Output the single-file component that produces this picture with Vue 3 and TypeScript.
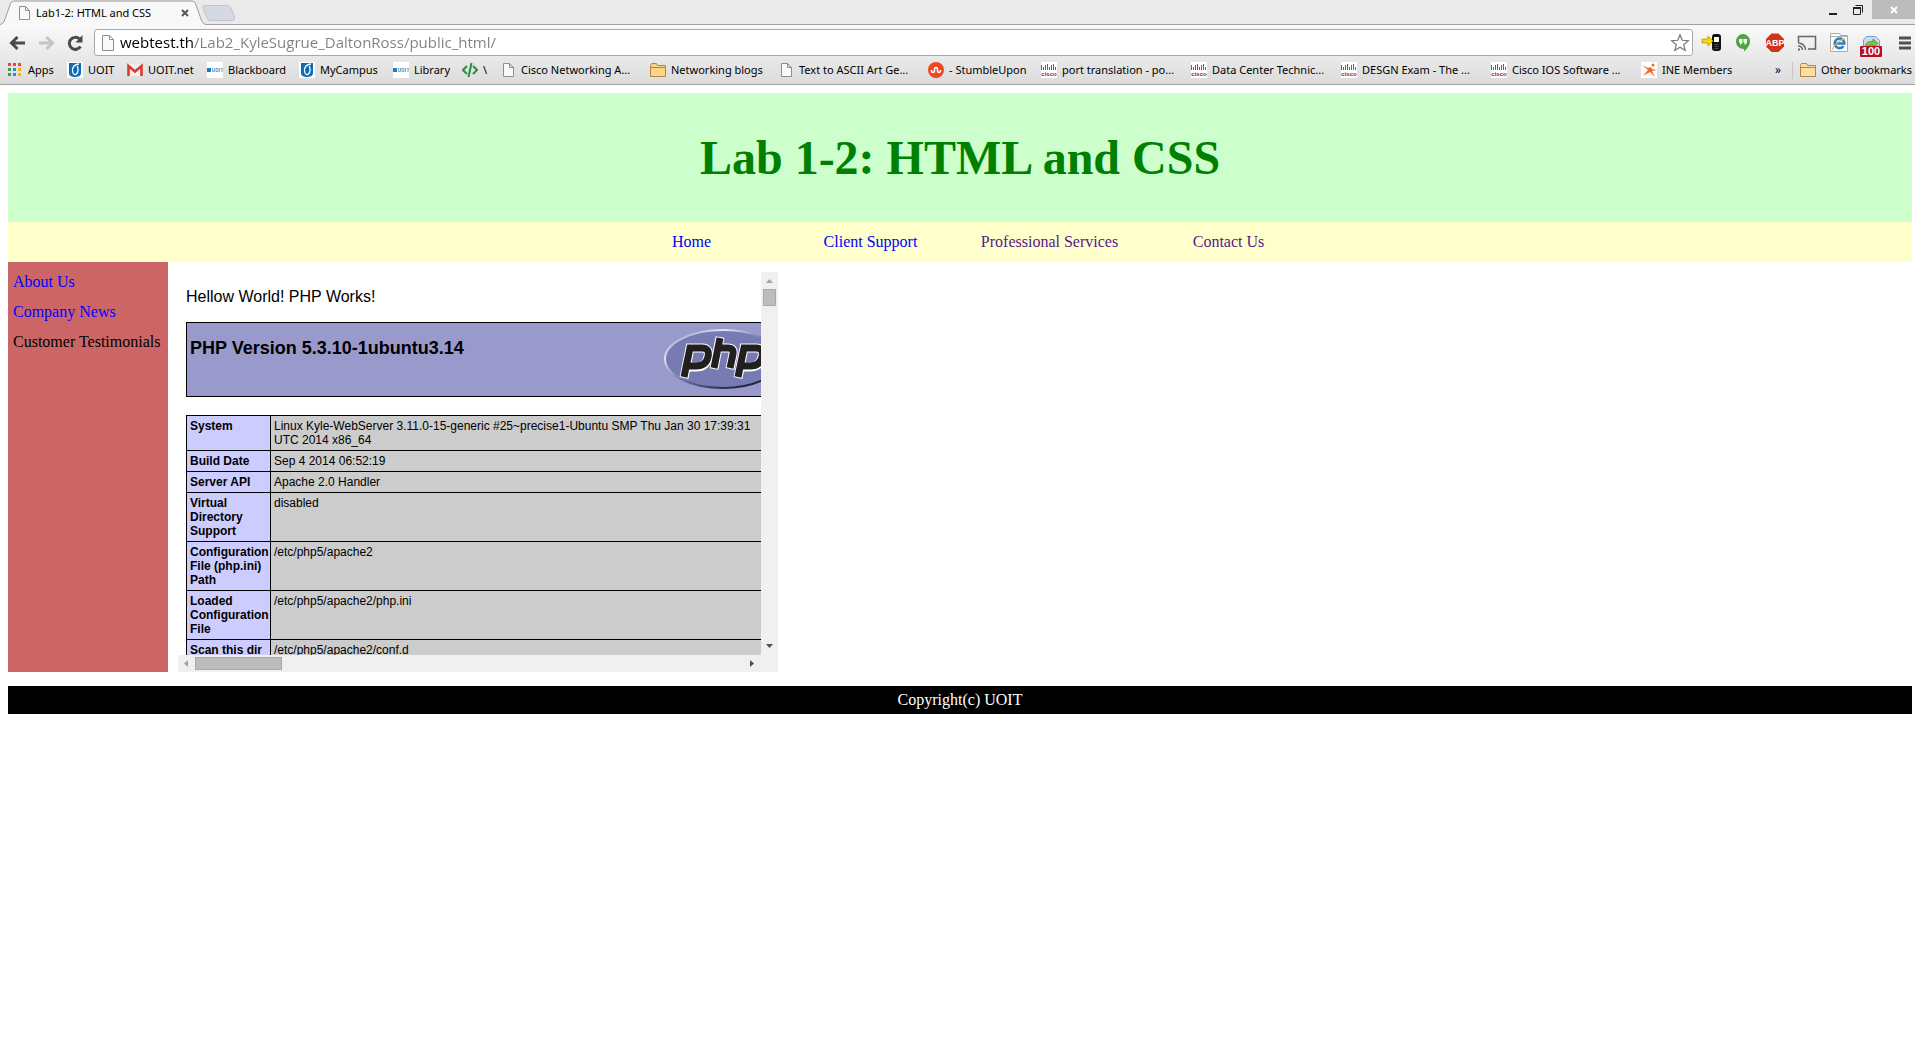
<script setup lang="ts">
interface Bookmark {
  label: string
  icon: string
  width: number
}

const address = 'webtest.th/Lab2_KyleSugrue_DaltonRoss/public_html/'

const bookmarks: Bookmark[] = [
  { label: 'Apps', icon: 'apps', width: 60 },
  { label: 'UOIT', icon: 'uoit', width: 60 },
  { label: 'UOIT.net', icon: 'gmail', width: 80 },
  { label: 'Blackboard', icon: 'library', width: 92 },
  { label: 'MyCampus', icon: 'uoit', width: 94 },
  { label: 'Library', icon: 'library', width: 69 },
  { label: '\\', icon: 'code', width: 38 },
  { label: 'Cisco Networking A...', icon: 'file', width: 150 },
  { label: 'Networking blogs', icon: 'folder', width: 128 },
  { label: 'Text to ASCII Art Ge...', icon: 'file', width: 150 },
  { label: '- StumbleUpon', icon: 'stumble', width: 113 },
  { label: 'port translation - po...', icon: 'cisco', width: 150 },
  { label: 'Data Center Technic...', icon: 'cisco', width: 150 },
  { label: 'DESGN Exam - The ...', icon: 'cisco', width: 150 },
  { label: 'Cisco IOS Software ...', icon: 'cisco', width: 150 },
  { label: 'INE Members', icon: 'ine', width: 110 },
]

const navLinks = [
  { label: 'Home', visited: false },
  { label: 'Client Support', visited: false },
  { label: 'Professional Services', visited: true },
  { label: 'Contact Us', visited: true },
]

const phpRows = [
  { name: 'System', value: 'Linux Kyle-WebServer 3.11.0-15-generic #25~precise1-Ubuntu SMP Thu Jan 30 17:39:31\nUTC 2014 x86_64' },
  { name: 'Build Date', value: 'Sep 4 2014 06:52:19' },
  { name: 'Server API', value: 'Apache 2.0 Handler' },
  { name: 'Virtual Directory Support', value: 'disabled' },
  { name: 'Configuration File (php.ini) Path', value: '/etc/php5/apache2' },
  { name: 'Loaded Configuration File', value: '/etc/php5/apache2/php.ini' },
  { name: 'Scan this dir', value: '/etc/php5/apache2/conf.d' },
]

const appColors = ['#e8453c', '#e8453c', '#e8453c', '#34a060', '#3b7de0', '#f5b400', '#34a060', '#3b7de0', '#f5b400']
const ciscoBars = [5, 3, 5, 6, 3, 5, 6, 3]
</script>

<template>
  <div class="browser">
    <header class="chrome">
      <div class="tabstrip">
        <div class="tab">
          <svg class="tab-shape" width="206" height="25" viewBox="0 0 206 25">
            <path d="M0 24.5 C3 24 4 22 5 19 L10 5 C11 2 12 1 15 1 H191 C194 1 195 2 196 5 L201 19 C202 22 203 24 206 24.5 V25 H0Z" fill="#f8f8f8" />
            <path d="M0 24.5 C3 24 4 22 5 19 L10 5 C11 2 12 1 15 1 H191 C194 1 195 2 196 5 L201 19 C202 22 203 24 206 24.5" fill="none" stroke="#9d9d9d" />
          </svg>
          <svg class="tab-icon" width="16" height="16" viewBox="0 0 16 16">
            <path d="M3.5 1.5h6l4 4v9h-10z M9.5 1.5v4h4" fill="#fafafa" stroke="#8e8e8e" />
          </svg>
          <span class="tab-title">Lab1-2: HTML and CSS</span>
          <button class="plain tab-close" aria-label="Close tab">
            <svg width="8" height="8" viewBox="0 0 8 8"><path d="M1 1l6 6M7 1L1 7" stroke="#555" stroke-width="2" /></svg>
          </button>
        </div>
        <button class="plain new-tab" aria-label="New tab">
          <svg width="34" height="18" viewBox="0 0 34 18">
            <path d="M3 1.500H25C27 1.500 28 2 29 4L32.500 13C33 15 32 16.500 30 16.500H9C7 16.500 6 16 5 14L1 4C0.500 2.500 1 1.500 3 1.500Z" fill="#d5dae2" stroke="#bfc3c9" />
          </svg>
        </button>
        <div class="window-buttons">
          <button class="plain" aria-label="Minimize">
            <svg width="10" height="12" viewBox="0 0 10 12"><path d="M0 9h8v2H0z" fill="#222" /></svg>
          </button>
          <button class="plain" aria-label="Restore">
            <svg width="12" height="12" viewBox="0 0 12 12"><path d="M1.500 3.500h7v7h-7z M3.500 1.500h7v7" fill="none" stroke="#222" /><path d="M1 3h8v2H1z" fill="#222" /></svg>
          </button>
          <button class="plain close" aria-label="Close">
            <svg width="8" height="8" viewBox="0 0 8 8"><path d="M1 1l6 6M7 1L1 7" stroke="#fff" stroke-width="2" /></svg>
          </button>
        </div>
      </div>

      <div class="toolbar">
        <button class="plain" aria-label="Back">
          <svg width="17" height="16" viewBox="0 0 17 16"><path d="M16 8H3M8.500 2L2.500 8l6 6" fill="none" stroke="#4a4a4a" stroke-width="3" /></svg>
        </button>
        <button class="plain" aria-label="Forward">
          <svg width="17" height="16" viewBox="0 0 17 16"><path d="M1 8h13M8.500 2l6 6-6 6" fill="none" stroke="#c4c4c4" stroke-width="3" /></svg>
        </button>
        <button class="plain" aria-label="Reload">
          <svg width="17" height="16" viewBox="0 0 17 16"><path d="M13.500 11.500A6 6 0 1 1 12.500 4" fill="none" stroke="#4a4a4a" stroke-width="3" /><path d="M15.500 0v7.500H8.500z" fill="#4a4a4a" /></svg>
        </button>
        <div class="omnibox">
          <svg width="16" height="18" viewBox="0 0 16 18"><path d="M2.500 1.500h7l4 4v11h-11z M9.500 1.500v4h4" fill="#fafafa" stroke="#8e8e8e" /></svg>
          <input class="address" type="text" aria-label="Address" :value="address" spellcheck="false" />
          <button class="plain" aria-label="Bookmark this page">
            <svg width="20" height="20" viewBox="0 0 20 20"><path d="M10 1.800l2.300 5.500 6 .4-4.600 3.900 1.500 5.900-5.200-3.200-5.200 3.200 1.500-5.900L1.700 7.700l6-.4z" fill="#fff" stroke="#777" stroke-width="1.200" /></svg>
          </button>
        </div>
        <div class="extensions">
          <button class="plain" aria-label="Send to phone">
            <svg width="20" height="20" viewBox="0 0 20 20">
              <rect x="11" y="1" width="9" height="17" rx="3" fill="#111" /><rect x="13" y="4" width="5" height="5" fill="#fff" /><path d="M13.500 11.500h4M13.500 13.500h4M13.500 15.500h4" stroke="#666" stroke-dasharray="1 .5" />
              <path d="M1 6h6V3l5 5-5 5v-3H1z" fill="#f7dc00" stroke="#b89a00" stroke-width=".8" />
            </svg>
          </button>
          <button class="plain" aria-label="Hangouts">
            <svg width="20" height="20" viewBox="0 0 20 20"><path d="M10 1a7 7.500 0 0 1 7 7.500c0 4-3 7.500-6 10V16C6 16 3 12.500 3 8.500A7 7.500 0 0 1 10 1z" fill="#4fa443" /><path d="M6 6h3.500v3.500L8 11.500H7V9.500H6z M10.500 6H14v3.500l-1.500 2h-1V9.500h-1z" fill="#fff" /></svg>
          </button>
          <button class="plain" aria-label="Adblock Plus">
            <svg width="20" height="20" viewBox="0 0 20 20"><path d="M6.500.5h7l5.500 5.500v7.500l-5.500 5.500h-7L1 13.500V6z" fill="#d0341a" /><text x="10" y="13" text-anchor="middle" font-family="Liberation Sans, sans-serif" font-weight="bold" font-size="9" fill="#fff">ABP</text></svg>
          </button>
          <button class="plain" aria-label="Cast">
            <svg width="20" height="20" viewBox="0 0 20 20" fill="none" stroke="#666"><path d="M1.500 9V3.500h17v12.500H11" stroke-width="1.500" /><path d="M1 10a7 7 0 0 1 7.500 7M1 13a4 4 0 0 1 4.500 4" stroke-width="1.400" /><path d="M1 15.500h2v2H1z" fill="#666" stroke="none" /></svg>
          </button>
          <button class="plain" aria-label="Internet Explorer tab">
            <svg width="20" height="20" viewBox="0 0 20 20"><path d="M1.500.5h9l1 2h7v16h-17z" fill="#fff" stroke="#aaa" /><path d="M2 3.500h16" stroke="#aaa" /><path d="M14.500 13a4.800 4.800 0 1 1 .8-2.500H7" fill="none" stroke="#2a7fc9" stroke-width="2.600" /><path d="M4 17c-1-3 7-11 12.500-11" fill="none" stroke="#f3b52b" stroke-width="1.300" /></svg>
          </button>
          <button class="plain badge-button" aria-label="Tasks">
            <svg width="22" height="22" viewBox="0 0 22 22"><path d="M3.500 11V5l3-3.500h9l4 4V11z" fill="#c6ddf0" stroke="#6ca4cf" /><path d="M6 9.500c0-2 2-3 7-3V4l5 4.500-5 3.500V10H9v2H6z" fill="#86c540" stroke="#4b8b1e" stroke-width=".8" /><rect x="0" y="11" width="22" height="11" rx="1" fill="#b90f23" /><text x="11" y="20" text-anchor="middle" font-family="Liberation Sans, sans-serif" font-weight="bold" font-size="11" fill="#fff">100</text></svg>
          </button>
        </div>
        <button class="plain menu" aria-label="Menu">
          <svg width="14" height="14" viewBox="0 0 14 14"><path d="M1 2h12M1 7h12M1 12h12" stroke="#505050" stroke-width="3" /></svg>
        </button>
      </div>

      <nav class="bookmarks" aria-label="Bookmarks">
        <a v-for="(b, i) in bookmarks" :key="i" href="#" class="bookmark" :style="{ width: b.width + 'px' }">
          <svg width="16" height="16" viewBox="0 0 16 16">
            <g v-if="b.icon === 'apps'"><rect v-for="(c, n) in appColors" :key="n" :x="1 + (n % 3) * 5" :y="1 + Math.floor(n / 3) * 5" width="3" height="3" :fill="c" /></g>
            <g v-else-if="b.icon === 'uoit'"><rect width="16" height="16" fill="#fff" /><path d="M2 1h12v10c0 3-3 4-6 4s-6-1-6-4z" fill="#0a6cb8" /><path d="M12 2C8 2 5 5 5.500 9c.3 3 2.500 4.500 4 3 2-2 2-6 .5-8" fill="none" stroke="#fff" stroke-width="1.300" /></g>
            <g v-else-if="b.icon === 'gmail'"><rect y="2" width="16" height="12" rx="1" fill="#f3f0f0" /><path d="M1.500 14V4L8 9.500 14.500 4v10" fill="none" stroke="#d93a35" stroke-width="2.600" /></g>
            <g v-else-if="b.icon === 'library'"><rect width="16" height="16" fill="#fff" /><rect y="6" width="4" height="4" fill="#1680c4" /><path d="M5.500 6v3.500h2V6 M9 6.500h2v3H9z M12.500 6v4 M14 6.500h2M15 6.500V10" fill="none" stroke="#79a6c9" /></g>
            <g v-else-if="b.icon === 'code'" fill="none" stroke="#2a8c46" stroke-width="2"><path d="M5 4L1 8l4 4M11 4l4 4-4 4M9.500 1l-3 14" /></g>
            <path v-else-if="b.icon === 'file'" d="M3.500 1.500h6l4 4v9h-10z M9.500 1.500v4h4" fill="#fafafa" stroke="#8e8e8e" />
            <path v-else-if="b.icon === 'folder'" d="M.5 3.500l1-2h5l1 2h8v11H.5z M.5 5.500h15" fill="#fbd488" stroke="#b28445" />
            <g v-else-if="b.icon === 'stumble'"><circle cx="8" cy="8" r="8" fill="#eb4823" /><path d="M3.500 8v1a1.500 1.500 0 0 0 3 0V7a1.500 1.500 0 0 1 3 0v2a1.500 1.500 0 0 0 3 0V8" fill="none" stroke="#fff" stroke-width="1.500" /></g>
            <g v-else-if="b.icon === 'cisco'"><rect width="16" height="16" fill="#fff" /><rect v-for="(h, n) in ciscoBars" :key="n" :x="n * 2" :y="8 - h" width="1" :height="h" fill="#456f85" /><text x="8" y="14" text-anchor="middle" font-family="Liberation Sans, sans-serif" font-weight="bold" font-size="6" fill="#a5121c">cisco</text></g>
            <g v-else><rect width="16" height="16" fill="#fff" /><circle cx="12" cy="3" r="1.500" fill="#ee6a2c" /><path d="M1 3l6 3 3-1 1 2 5 1-5 1 3 6-5-5-7 4 5-6z" fill="#ee6a2c" /></g>
          </svg>
          <span>{{ b.label }}</span>
        </a>
        <button class="plain overflow" aria-label="More bookmarks">»</button>
        <a href="#" class="bookmark other">
          <svg width="16" height="16" viewBox="0 0 16 16"><path d="M.5 3.500l1-2h5l1 2h8v11H.5z M.5 5.500h15" fill="#fbe0a5" stroke="#b28445" /></svg>
          <span>Other bookmarks</span>
        </a>
      </nav>
    </header>

    <main class="page">
      <div class="banner"><h1>Lab 1-2: HTML and CSS</h1></div>
      <nav class="site-nav" aria-label="Site">
        <a v-for="link in navLinks" :key="link.label" href="#" :class="{ visited: link.visited }">{{ link.label }}</a>
      </nav>
      <div class="columns">
        <aside class="sidebar">
          <a href="#">About Us</a>
          <a href="#">Company News</a>
          <span>Customer Testimonials</span>
        </aside>
        <section class="frame">
          <div class="viewport">
            <p class="hello">Hellow World! PHP Works!</p>
            <div class="php-head">
              <h2>PHP Version 5.3.10-1ubuntu3.14</h2>
              <svg width="120" height="67" viewBox="0 0 120 67">
                <defs>
                  <linearGradient id="rim" x1="0" y1="0" x2="1" y2="1">
                    <stop offset="0" stop-color="#7d80b5" /><stop offset=".25" stop-color="#e4e4f2" /><stop offset=".5" stop-color="#7072a8" /><stop offset=".8" stop-color="#26253a" />
                  </linearGradient>
                </defs>
                <ellipse cx="60" cy="33" rx="58" ry="29" fill="#777bb3" stroke="url(#rim)" stroke-width="2" />
                <g fill="none" stroke-linejoin="miter">
                  <g stroke="#fff" stroke-width="9">
                    <path d="M21 52L27 22H39Q47 22 45 31Q43 41 33 41H26" /><path d="M51 43L57 11M55 22H65Q71 22 70 28L67 43" /><path d="M75 52L81 22H93Q101 22 99 31Q97 41 87 41H80" />
                  </g>
                  <g stroke="#221f20" stroke-width="7">
                    <path d="M21 51L27 22H39Q47 22 45 31Q43 40 33 40H26" /><path d="M51 42L57 12M55 22H65Q71 22 70 28L67 42" /><path d="M75 51L81 22H93Q101 22 99 31Q97 40 87 40H80" />
                  </g>
                </g>
              </svg>
            </div>
            <table class="php-info">
              <tbody>
                <tr v-for="row in phpRows" :key="row.name"><th scope="row">{{ row.name }}</th><td>{{ row.value }}</td></tr>
              </tbody>
            </table>
          </div>
          <div class="bar vertical">
            <svg width="17" height="17" viewBox="0 0 17 17"><path d="M5 11L8.500 7 12 11z" fill="#a3a3a3" /></svg>
            <div class="thumb"></div>
            <svg class="end" width="17" height="17" viewBox="0 0 17 17"><path d="M5 6L8.500 10 12 6z" fill="#505050" /></svg>
          </div>
          <div class="bar horizontal">
            <svg width="17" height="17" viewBox="0 0 17 17"><path d="M10 5L6 8.500 10 12z" fill="#a3a3a3" /></svg>
            <div class="thumb"></div>
            <svg class="end" width="17" height="17" viewBox="0 0 17 17"><path d="M6 5L10 8.500 6 12z" fill="#505050" /></svg>
          </div>
          <div class="corner"></div>
        </section>
      </div>
      <footer class="footer">Copyright(c) UOIT</footer>
    </main>
  </div>
</template>

<style>
body {
  background: #fff;
  overflow-x: hidden;
}
</style>

<style scoped>
.browser {
  font-family: "Liberation Serif", serif;
  font-size: 16px;
}
svg {
  display: block;
  flex: none;
}
.plain {
  padding: 0;
  border: 0;
  background: none;
  display: flex;
  align-items: center;
  justify-content: center;
}
.chrome {
  height: 84px;
  border-bottom: 1px solid #a2a2a2;
  background: linear-gradient(#eaeaea 24px, #f9f9f9 25px, #dcdcdc 84px);
  font-family: "Noto Sans", "Open Sans", sans-serif;
  font-size: 11px;
  color: #000;
}
.tabstrip {
  height: 25px;
  display: flex;
  box-shadow: inset 0 -1px #a0a0a0;
}
.tab {
  position: relative;
  width: 202px;
  padding-left: 16px;
  box-sizing: border-box;
  display: flex;
  align-items: center;
}
.tab-shape {
  position: absolute;
  left: 0;
  top: 0;
}
.tab-icon,
.tab-title,
.tab-close {
  position: relative;
}
.tab-title {
  flex: 1;
  margin-left: 4px;
  white-space: nowrap;
}
.tab-close {
  margin-right: 13px;
}
.new-tab {
  height: 26px;
}
.window-buttons {
  margin-left: auto;
  display: flex;
  align-items: flex-start;
}
.window-buttons .plain {
  height: 19px;
  width: 24px;
}
.window-buttons .close {
  width: 43px;
  margin-left: 2px;
  background: #bcbcbc;
}
.toolbar {
  height: 35px;
  padding: 0 3px 0 9px;
  display: flex;
  align-items: center;
}
.toolbar > .plain {
  width: 17px;
  margin-right: 12px;
}
.omnibox {
  flex: 1;
  height: 27px;
  margin: 0 8px 0 -2px;
  padding: 0 2px 0 5px;
  box-sizing: border-box;
  border: 1px solid #a9a9a9;
  border-radius: 3px;
  background: #fff;
  display: flex;
  align-items: center;
}
.address {
  flex: 1;
  min-width: 0;
  height: 24px;
  margin-left: 4px;
  padding: 0 0 2px;
  box-sizing: border-box;
  border: 0;
  outline: 0;
  font: 15px/22px "Open Sans", "Noto Sans", sans-serif;
  color: transparent;
  background: linear-gradient(to right, #000 74px, #808080 74px);
  background-clip: text;
  -webkit-background-clip: text;
}
.extensions {
  display: flex;
  gap: 12px;
}
.extensions .plain {
  width: 20px;
  height: 20px;
}
.extensions .badge-button {
  height: 27px;
  margin-bottom: -7px;
}
.toolbar > .menu {
  width: 14px;
  margin: 0 0 0 17px;
}
.bookmarks {
  height: 20px;
  padding: 0 3px 0 7px;
  display: flex;
  align-items: center;
}
.bookmark {
  display: flex;
  align-items: center;
  gap: 5px;
  flex: none;
  color: #000;
  text-decoration: none;
  white-space: nowrap;
}
.bookmark span {
  padding-bottom: 2px;
}
.overflow {
  margin-left: auto;
  padding: 0 11px 2px 0;
  font: 12px "Open Sans", sans-serif;
}
.other {
  padding-left: 7px;
  border-left: 1px solid #c8c8c8;
}
.page {
  padding: 8px 3px 8px 8px;
}
.banner {
  height: 129px;
  background: #cfc;
  display: flex;
  align-items: center;
  justify-content: center;
}
.banner h1 {
  margin: 0;
  font-size: 48px;
  color: #008000;
}
.site-nav {
  height: 40px;
  background: #ffc;
  display: grid;
  grid-template-columns: repeat(4, 179px);
  justify-content: center;
  align-items: center;
  text-align: center;
}
a {
  color: #00f;
  text-decoration: none;
}
.site-nav .visited {
  color: #551a8b;
}
.columns {
  display: flex;
  gap: 10px;
}
.sidebar {
  width: 160px;
  padding: 5px;
  box-sizing: border-box;
  background: #c66;
  display: flex;
  flex-direction: column;
  line-height: 30px;
}
.frame {
  margin-top: 10px;
  display: grid;
  grid-template: 383px 17px / 583px 17px;
  font-family: "Liberation Sans", sans-serif;
}
.viewport {
  padding: 0 8px;
  overflow: hidden;
}
.hello {
  margin: 16px 0;
  line-height: 18px;
}
.php-head {
  width: 601px;
  height: 75px;
  padding: 3px;
  box-sizing: border-box;
  border: 1px solid #000;
  background: #99c;
  display: flex;
  justify-content: space-between;
}
.php-head h2 {
  margin: 12px 0 0;
  padding: 0;
  font-size: 18px;
  line-height: 20px;
}
.php-info {
  width: 601px;
  margin-top: 18px;
  table-layout: fixed;
  border-collapse: collapse;
  font-size: 12px;
  line-height: 14px;
}
.php-info th,
.php-info td {
  padding: 3px;
  border: 1px solid #000;
  text-align: left;
  vertical-align: top;
  white-space: pre-line;
  background: #ccc;
}
.php-info th {
  width: 77px;
  background: #ccf;
}
.bar {
  background: #f0f0f0;
  display: flex;
  align-items: center;
}
.vertical {
  flex-direction: column;
}
.thumb {
  box-sizing: border-box;
  border: 1px solid #a8a8a8;
  background: #bcbcbc;
}
.vertical .thumb {
  width: 13px;
  height: 17px;
}
.horizontal .thumb {
  width: 87px;
  height: 13px;
}
.vertical .end {
  margin-top: auto;
}
.horizontal .end {
  margin-left: auto;
}
.corner {
  background: #f0f0f0;
}
.footer {
  margin-top: 14px;
  background: #000;
  color: #fff;
  line-height: 28px;
  text-align: center;
}
</style>
